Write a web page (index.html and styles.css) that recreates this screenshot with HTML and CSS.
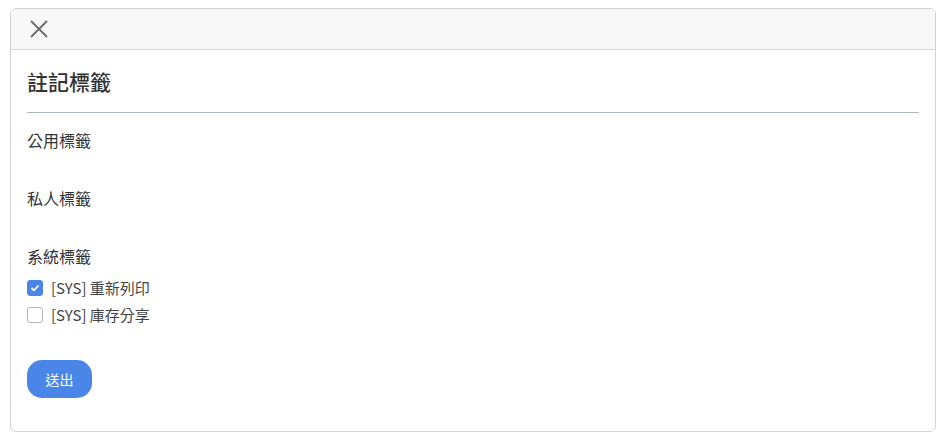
FILE: index.html
```html
<!DOCTYPE html>
<html lang="zh-Hant">
<head>
<meta charset="utf-8">
<title>註記標籤</title>
<link rel="stylesheet" href="styles.css">
</head>
<body>
<div class="card">
  <div class="card-header">
    <button class="close" aria-label="close">
      <svg width="18" height="18" viewBox="0 0 18 18"><path d="M1 1 L17 17 M17 1 L1 17" stroke="#6b6b6b" stroke-width="1.8" fill="none"/></svg>
    </button>
  </div>
  <div class="card-body">
    <h2 class="title">註記標籤</h2>
    <div class="divider"></div>
    <div class="groups">
      <div class="group"><div class="label">公用標籤</div></div>
      <div class="group"><div class="label">私人標籤</div></div>
      <div class="group">
        <div class="label">系統標籤</div>
        <div class="checks">
          <label class="check"><span class="box checked"><svg width="10" height="8" viewBox="0 0 10 8"><path d="M1.5 4 L4 6.3 L8.5 1.5" stroke="#fff" stroke-width="1.8" fill="none"/></svg></span>[SYS] 重新列印</label>
          <label class="check"><span class="box"></span>[SYS] 庫存分享</label>
        </div>
      </div>
    </div>
    <button class="submit">送出</button>
  </div>
</div>
</body>
</html>
```
FILE: styles.css
```css
html, body { margin: 0; padding: 0; background: #fff; }
body {
  padding: 8px 6px 0 10px;
  font-family: "Noto Sans CJK TC", "Noto Sans", sans-serif;
  color: #333;
}
.card {
  width: 924px;
  height: 422px;
  border: 1px solid #d3d3d3;
  border-radius: 6px;
  overflow: hidden;
}
.card-header {
  height: 40px;
  background: #f8f8f8;
  border-bottom: 1px solid #d6d6d6;
  display: flex;
  align-items: center;
  padding-left: 19px;
}
.close {
  border: 0; background: none; padding: 0; margin: 0;
  width: 18px; height: 18px; display: flex;
}
.card-body { padding: 0 16px; }
.title {
  margin: 0;
  padding-top: 17px;
  font-size: 21px;
  font-weight: 500;
  line-height: 28px;
  height: 28px;
  color: #333;
}
.divider {
  margin-top: 17px;
  height: 1px;
  background: #aeb6bf;
}
.groups {
  display: flex;
  flex-direction: column;
  gap: 38px;
  padding-top: 17px;
}
.label {
  font-size: 16px;
  line-height: 20px;
}
.checks {
  margin-top: 8px;
  display: flex;
  flex-direction: column;
}
.check {
  display: flex; align-items: center;
  height: 27px;
  font-size: 15px;
  color: #444;
}
.box {
  width: 14px; height: 14px;
  border: 1px solid #b5b5b5;
  border-radius: 3px;
  margin-right: 8px;
  display: flex; align-items: center; justify-content: center;
  background: #fff;
}
.box.checked { background: #4a86e8; border-color: #4a86e8; }
.submit {
  display: block;
  margin-top: 32px;
  width: 65px; height: 38px;
  border: 0;
  border-radius: 15px;
  background: #4a86e8;
  color: #fff;
  font-family: inherit;
  font-size: 14px;
  padding: 0;
}
```
